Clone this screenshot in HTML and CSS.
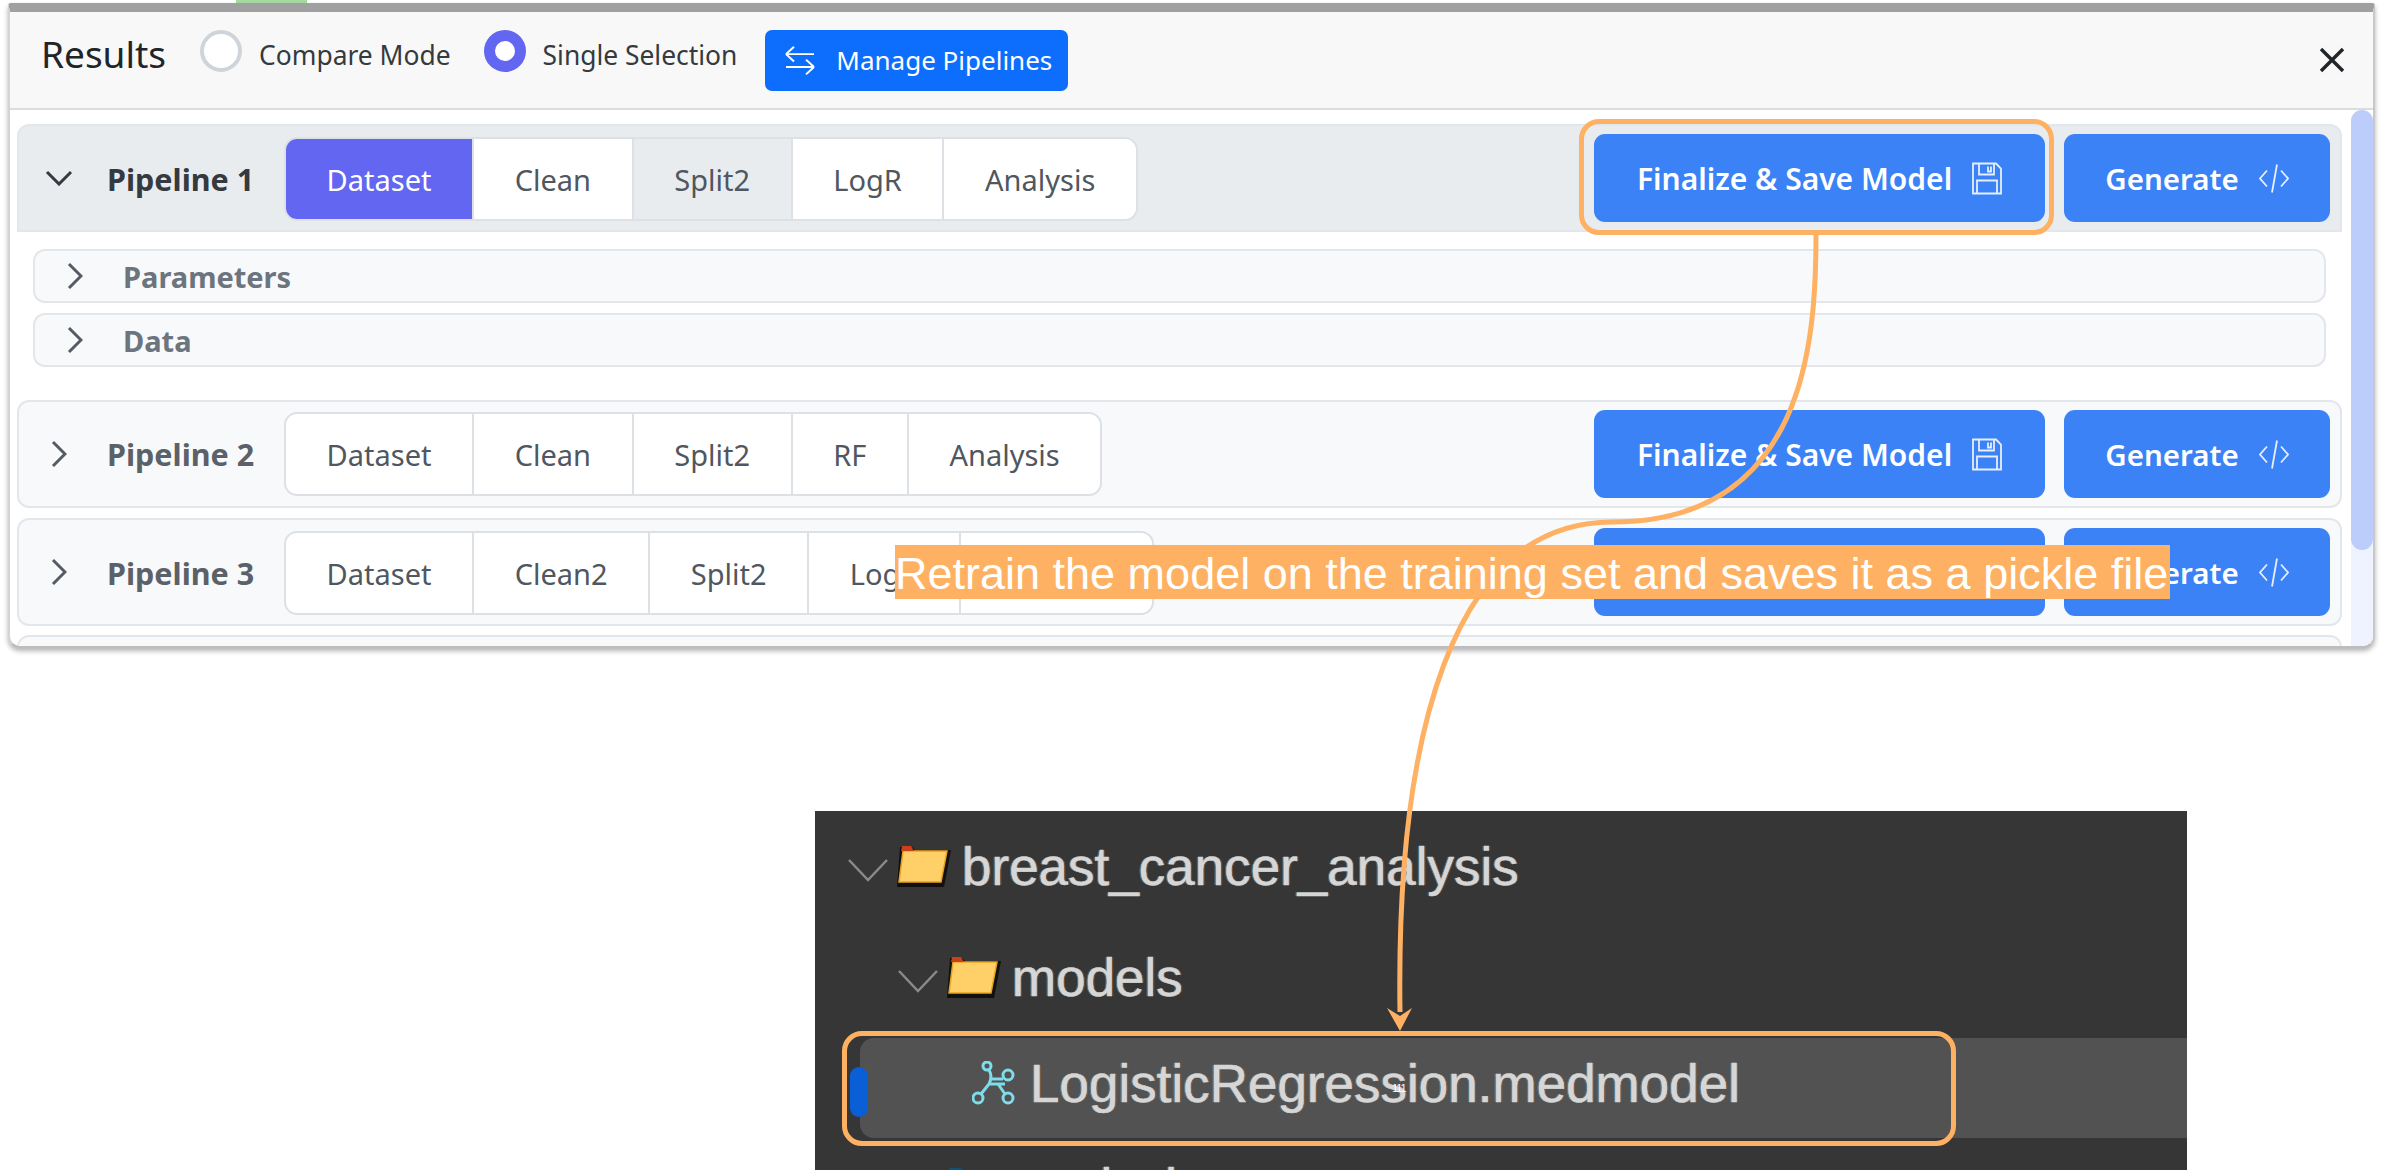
FILE: index.html
```html
<!DOCTYPE html>
<html lang="en">
<head>
    <meta charset="UTF-8">
    <meta name="viewport" content="width=device-width, initial-scale=1.0">
    <title>Results</title>
    <link rel="stylesheet" href="styles.css">
</head>
<body>

    <div class="top-strip"><span class="top-strip-tab"></span></div>

    <!-- Results panel -->
    <div class="panel">
        <div class="panel-header">
            <h1 class="panel-title">Results</h1>
            <label class="radio-option"><span class="radio"></span>Compare Mode</label>
            <label class="radio-option"><span class="radio radio-on"></span>Single Selection</label>
            <button class="manage-btn">
                <svg class="manage-icon" viewBox="0 0 30 30"><path d="M1 11H29M1 11L9 3M1 11L9 19M1 25H29M29 25L21 17M29 25L21 33" transform="translate(0 -1) scale(1 .92)"/></svg>
                Manage Pipelines
            </button>
            <svg class="close-icon" viewBox="0 0 28 28"><path d="M3 3L25 25M25 3L3 25"/></svg>
        </div>

        <div class="panel-body">
            <div class="pipeline-list">

                <div class="pipeline pipeline-open">
                    <svg class="chevron chevron-down" viewBox="0 0 28 16"><path d="M2 2L14 14L26 2"/></svg>
                    <span class="pipeline-name">Pipeline 1</span>
                    <div class="stepper">
                        <span class="step step-selected">Dataset</span>
                        <span class="step">Clean</span>
                        <span class="step step-muted">Split2</span>
                        <span class="step">LogR</span>
                        <span class="step">Analysis</span>
                    </div>
                    <button class="action-btn finalize-btn">Finalize &amp; Save Model
                        <svg class="btn-icon" viewBox="0 0 30 32"><path d="M1 1H24L29 6V31H1ZM7 1V12H22V1M16 4V9H19V4M5 31V18H25V31"/></svg>
                    </button>
                    <button class="action-btn generate-btn">Generate
                        <svg class="btn-icon" viewBox="0 0 30 32"><path d="M8 8L1 16L8 24M22 8L29 16L22 24M18 2L13 30"/></svg>
                    </button>
                </div>

                <div class="section">
                    <svg class="chevron chevron-side" viewBox="0 0 16 28"><path d="M2 2L14 14L2 26"/></svg>
                    <span class="section-name">Parameters</span>
                </div>
                <div class="section">
                    <svg class="chevron chevron-side" viewBox="0 0 16 28"><path d="M2 2L14 14L2 26"/></svg>
                    <span class="section-name">Data</span>
                </div>

                <div class="pipeline pipeline-second">
                    <svg class="chevron chevron-side" viewBox="0 0 16 28"><path d="M2 2L14 14L2 26"/></svg>
                    <span class="pipeline-name">Pipeline 2</span>
                    <div class="stepper">
                        <span class="step">Dataset</span>
                        <span class="step">Clean</span>
                        <span class="step">Split2</span>
                        <span class="step">RF</span>
                        <span class="step">Analysis</span>
                    </div>
                    <button class="action-btn finalize-btn">Finalize &amp; Save Model
                        <svg class="btn-icon" viewBox="0 0 30 32"><path d="M1 1H24L29 6V31H1ZM7 1V12H22V1M16 4V9H19V4M5 31V18H25V31"/></svg>
                    </button>
                    <button class="action-btn generate-btn">Generate
                        <svg class="btn-icon" viewBox="0 0 30 32"><path d="M8 8L1 16L8 24M22 8L29 16L22 24M18 2L13 30"/></svg>
                    </button>
                </div>

                <div class="pipeline">
                    <svg class="chevron chevron-side" viewBox="0 0 16 28"><path d="M2 2L14 14L2 26"/></svg>
                    <span class="pipeline-name">Pipeline 3</span>
                    <div class="stepper">
                        <span class="step">Dataset</span>
                        <span class="step">Clean2</span>
                        <span class="step">Split2</span>
                        <span class="step">LogR</span>
                        <span class="step">Analysis</span>
                    </div>
                    <button class="action-btn finalize-btn">Finalize &amp; Save Model
                        <svg class="btn-icon" viewBox="0 0 30 32"><path d="M1 1H24L29 6V31H1ZM7 1V12H22V1M16 4V9H19V4M5 31V18H25V31"/></svg>
                    </button>
                    <button class="action-btn generate-btn">Generate
                        <svg class="btn-icon" viewBox="0 0 30 32"><path d="M8 8L1 16L8 24M22 8L29 16L22 24M18 2L13 30"/></svg>
                    </button>
                </div>

                <div class="pipeline"></div>
            </div>

            <div class="scroll-track"><div class="scroll-thumb"></div></div>
        </div>
    </div>

    <!-- File tree screenshot -->
    <div class="tree">
        <div class="tree-row tree-level-1">
            <svg class="tree-chevron" viewBox="0 0 42 26"><path d="M2 3L21 23L40 3"/></svg>
            <svg class="folder" viewBox="0 0 54 42"><path class="folder-back" d="M3 2H15L18 5H54L47 42H0Z"/><path class="folder-front" d="M6 6H50L44 37H2Z"/><path class="folder-tab" d="M5 1H14L17 6H4Z"/></svg>
            <span class="tree-name">breast_cancer_analysis</span>
        </div>
        <div class="tree-row tree-level-2">
            <svg class="tree-chevron" viewBox="0 0 42 26"><path d="M2 3L21 23L40 3"/></svg>
            <svg class="folder" viewBox="0 0 54 42"><path class="folder-back" d="M3 2H15L18 5H54L47 42H0Z"/><path class="folder-front" d="M6 6H50L44 37H2Z"/><path class="folder-tab" d="M5 1H14L17 6H4Z"/></svg>
            <span class="tree-name">models</span>
        </div>
        <div class="tree-row tree-file">
            <span class="tree-marker"></span>
            <svg class="model-icon" viewBox="0 0 44 46"><circle cx="15" cy="5" r="4"/><circle cx="6" cy="37" r="5"/><circle cx="36" cy="14" r="5"/><circle cx="36" cy="37" r="5"/><path d="M17 9C20 14 19 19 17 23M9 33L17 23H33M20 18H31M26 23L33 33"/></svg>
            <span class="tree-name">LogisticRegression.medmodel</span>
            <span class="tree-count">111</span>
        </div>
        <div class="tree-row tree-level-2 tree-clipped">
            <span class="tree-spacer"></span>
            <svg class="folder folder-blue" viewBox="0 0 54 42"><path d="M2 2H14L18 7H52L46 41H1Z"/></svg>
            <span class="tree-name">analysis</span>
        </div>
    </div>

    <!-- Annotations over the screenshots -->
    <svg class="annotation-lines" viewBox="0 0 2387 1170">
        <path class="curve" d="M1816 235C1816 340 1806 522 1612 522C1450 522 1396 740 1400 1012"/>
        <path class="arrow-head" d="M1387 1008L1400 1016L1412 1008L1400 1031Z"/>
    </svg>
    <div class="highlight highlight-button"></div>
    <div class="highlight highlight-file"></div>
    <div class="callout">Retrain the model on the training set and saves it as a pickle file</div>

</body>
</html>
```

FILE: styles.css
```css
* {
    box-sizing: border-box;
}
html, body {
    height: 1170px;
    overflow: hidden;
}
body {
    margin: 0;
    background-color: #fff;
    font-family: "Noto Sans", "Open Sans", sans-serif;
    color: #212529;
    position: relative;
}

.top-strip {
    height: 3px;
    padding-left: 236px;
}
.top-strip-tab {
    display: block;
    width: 71px;
    height: 3px;
    background-color: #a5dba0;
}

/* Results panel */
.panel {
    width: 2367px;
    height: 645px;
    margin-left: 8px;
    display: flex;
    flex-direction: column;
    background-color: #fff;
    border-top: 9px solid #a0a0a0;
    border-left: 2px solid #d4d4d4;
    border-right: 2px solid #c8c8c8;
    border-bottom: 2px solid #bdbdbd;
    border-radius: 3px 3px 12px 12px;
    box-shadow: 0 3px 5px rgba(0, 0, 0, 0.3);
    overflow: hidden;
}
.panel-header {
    height: 98px;
    flex-shrink: 0;
    display: flex;
    align-items: center;
    background-color: #f8f8f8;
    border-bottom: 2px solid #dcdcdc;
    padding-left: 31px;
    padding-right: 27px;
}
.panel-title {
    margin: 0 34px 13px 0;
    font-size: 37px;
    font-weight: 400;
    line-height: 1;
}
.radio-option {
    display: flex;
    align-items: center;
    gap: 17px;
    margin-right: 33px;
    margin-bottom: 10px;
    font-size: 26.4px;
    color: #343a40;
}
.radio {
    width: 42px;
    height: 42px;
    margin-bottom: 8px;
    border: 4px solid #ced4da;
    border-radius: 50%;
    background-color: #fff;
}
.radio-on {
    border: 11px solid #6366f1;
}
.manage-btn {
    width: 303px;
    height: 61px;
    margin-left: -5px;
    display: flex;
    align-items: center;
    gap: 21px;
    padding: 0 0 0 20px;
    border: none;
    border-radius: 7px;
    background-color: #0d6efd;
    color: #fff;
    font-family: inherit;
    font-size: 26px;
}
.manage-icon {
    width: 30px;
    height: 30px;
    fill: none;
    stroke: #fff;
    stroke-width: 2;
}
.close-icon {
    width: 28px;
    height: 28px;
    margin-left: auto;
    fill: none;
    stroke: #212529;
    stroke-width: 3.4;
}

.panel-body {
    flex: 1;
    display: flex;
    min-height: 0;
}
.pipeline-list {
    width: 2333px;
    padding: 14px 0 0 7px;
    overflow: hidden;
}
.scroll-track {
    width: 22px;
    margin-left: 9px;
    background-color: #eff3ff;
    border-radius: 11px 11px 0 0;
}
.scroll-thumb {
    height: 440px;
    background-color: #bccdfb;
    border-radius: 11px;
}

.pipeline {
    height: 108px;
    display: flex;
    align-items: center;
    margin-bottom: 9px;
    padding-right: 10px;
    background-color: #f8f9fa;
    border: 2px solid #e3e6ea;
    border-radius: 12px;
}
.pipeline-open {
    background-color: #e9ecef;
    margin-bottom: 17px;
    border-radius: 12px 12px 0 0;
}
.pipeline-second {
    margin-top: 33px;
    margin-bottom: 10px;
}
.chevron {
    fill: none;
    stroke: #555b62;
    stroke-width: 3;
    flex-shrink: 0;
}
.chevron-down {
    width: 28px;
    height: 16px;
    margin-left: 26px;
    stroke: #343a40;
}
.chevron-side {
    width: 16px;
    height: 28px;
    margin-left: 32px;
}
.pipeline-name {
    width: 177px;
    margin-left: 34px;
    margin-top: 2px;
    font-size: 30.5px;
    font-weight: 700;
    color: #5b6168;
    white-space: nowrap;
}
.chevron-side + .pipeline-name {
    margin-left: 40px;
}
.pipeline-open .pipeline-name {
    color: #343a40;
}

.stepper {
    height: 84px;
    margin-top: 2px;
    display: flex;
    margin-right: auto;
    background-color: #fff;
    border: 2px solid #dde1e6;
    border-radius: 13px;
    overflow: hidden;
}
.pipeline-second .stepper,
.pipeline-second .pipeline-name {
    margin-top: 0;
}
.step {
    display: flex;
    align-items: center;
    padding: 0 40.6px;
    font-size: 29px;
    color: #4f5760;
    border-right: 2px solid #dde1e6;
}
.step:last-child {
    border-right: none;
}
.step-selected {
    background-color: #6366f1;
    color: #fff;
}
.step-muted {
    background-color: #e9ecef;
}

.action-btn {
    height: 88px;
    display: flex;
    align-items: center;
    justify-content: center;
    gap: 20px;
    border: none;
    border-radius: 11px;
    background-color: #3b82f6;
    color: #fff;
    font-family: inherit;
    font-size: 30px;
    font-weight: 600;
}
.finalize-btn {
    width: 451px;
    margin-right: 19px;
}
.generate-btn {
    width: 266px;
    font-size: 29.5px;
}
.btn-icon {
    width: 30px;
    height: 33px;
    fill: none;
    stroke: #e6efff;
    stroke-width: 1.8;
}

.section {
    width: 2293px;
    height: 54px;
    display: flex;
    align-items: center;
    margin: 0 0 10px 16px;
    background-color: #f8f9fa;
    border: 2px solid #e3e6ea;
    border-radius: 12px;
}
.section .chevron-side {
    margin-left: 32px;
}
.section-name {
    margin-left: 40px;
    font-size: 29px;
    font-weight: 700;
    color: #6c757d;
}

/* File tree */
.tree {
    width: 1372px;
    height: 359px;
    margin: 163px 0 0 815px;
    padding-top: 5px;
    background-color: #363636;
    overflow: hidden;
    display: flex;
    flex-direction: column;
    gap: 11px;
}
.tree-row {
    height: 100px;
    flex-shrink: 0;
    display: flex;
    align-items: center;
}
.tree-level-1 {
    padding-left: 32px;
}
.tree-level-2 {
    padding-left: 82px;
}
.tree-file {
    position: relative;
    margin-left: 45px;
    padding-left: 112px;
    padding-bottom: 9px;
    background-color: #525252;
    border-radius: 14px 0 0 14px;
}
.tree-clipped {
    height: 76px;
}
.tree-chevron {
    width: 42px;
    height: 26px;
    margin-top: 8px;
    fill: none;
    stroke: #8a8a8a;
    stroke-width: 2.5;
    filter: blur(0.6px);
}
.tree-spacer {
    width: 42px;
}
.folder {
    width: 54px;
    height: 42px;
    margin: 0 11px 0 8px;
    filter: blur(0.5px);
}
.folder-back {
    fill: #111;
}
.folder-tab {
    fill: #c9401a;
}
.folder-front {
    fill: #ffd068;
    stroke: #e9a21d;
    stroke-width: 1.5;
}
.folder-blue {
    fill: #12507a;
}
.tree-name {
    font-family: "Liberation Sans", Arial, sans-serif;
    font-size: 53px;
    color: #d6d6d6;
    -webkit-text-stroke: 0.5px #d6d6d6;
    text-shadow: -1.5px 0 0 rgba(90, 170, 220, 0.5), 1.5px 0 0 rgba(190, 110, 40, 0.5);
    filter: blur(0.7px);
    white-space: nowrap;
}
.tree-marker {
    position: absolute;
    left: -10px;
    top: 29px;
    width: 18px;
    height: 50px;
    border-radius: 9px;
    background-color: #0a5fd6;
}
.model-icon {
    width: 44px;
    height: 46px;
    margin-right: 14px;
    fill: none;
    stroke: #7fdcea;
    stroke-width: 3;
    filter: blur(0.5px);
}
.tree-count {
    position: absolute;
    left: 532px;
    top: 44px;
    font-family: "Liberation Sans", Arial, sans-serif;
    font-size: 11px;
    letter-spacing: -1px;
    color: #fff;
}

/* Annotations */
.annotation-lines {
    position: absolute;
    left: 0;
    top: 0;
    width: 2387px;
    height: 1170px;
    pointer-events: none;
}
.curve {
    fill: none;
    stroke: #ffb163;
    stroke-width: 5;
}
.arrow-head {
    fill: #ffb163;
}
.highlight {
    position: absolute;
    border: 5px solid #ffb163;
    border-radius: 20px;
}
.highlight-button {
    left: 1579px;
    top: 119px;
    width: 475px;
    height: 116px;
}
.highlight-file {
    left: 842px;
    top: 1031px;
    width: 1114px;
    height: 115px;
}
.callout {
    position: absolute;
    left: 895px;
    top: 545px;
    width: 1275px;
    height: 54px;
    background-color: #ffb163;
    color: #fff;
    font-family: "Liberation Sans", Arial, sans-serif;
    font-size: 45px;
    line-height: 57px;
    white-space: nowrap;
    overflow: hidden;
}
```
